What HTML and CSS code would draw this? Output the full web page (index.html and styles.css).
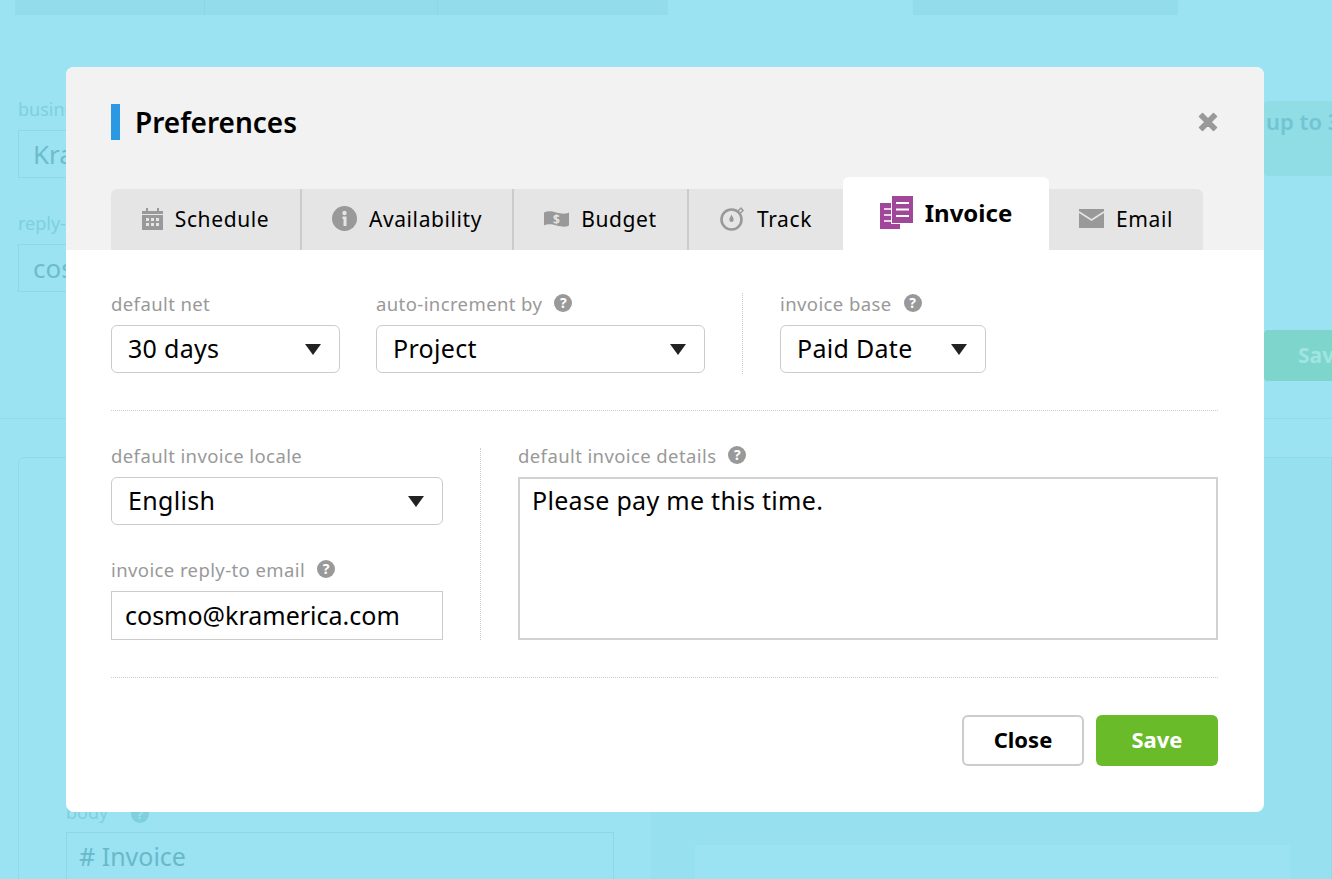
FILE: index.html
```html
<!DOCTYPE html>
<html lang="en">
<head>
  <meta charset="UTF-8" />
  <title>Preferences</title>
  <link rel="stylesheet" href="styles.css">
</head>
<body>
  <!-- page behind the modal -->
  <div class="page">
    <div class="top-strip">
      <div class="strip-cell strip-a"></div>
      <div class="strip-cell strip-b"></div>
      <div class="strip-cell strip-c"></div>
      <div class="strip-cell strip-d"></div>
    </div>
    <div class="page-form">
      <div class="page-left">
        <div class="page-label">business name</div>
        <div class="page-input">Kramerica</div>
        <div class="page-label page-label-2">reply-to email</div>
        <div class="page-input">cosmo@kramerica.com</div>
      </div>
      <div class="page-right">
        <div class="page-banner">up to 3</div>
        <div class="page-save">Save</div>
      </div>
    </div>
    <div class="page-rule"></div>
    <div class="page-panel">
      <div class="page-body">
        <div class="page-label page-body-label">body <span class="page-help">?</span></div>
        <div class="page-input page-body-input"># Invoice</div>
      </div>
      <div class="page-box"></div>
    </div>
  </div>

  <div class="modal">
    <div class="modal-head">
      <div class="title-row">
        <span class="title-bar"></span>
        <h2>Preferences</h2>
        <svg class="close-x" width="22" height="22" viewBox="0 0 22 22"><path d="M2.5 5.500 5.500 2.500 11 8l5.500-5.500 3 3L14 11l5.500 5.500-3 3L11 14l-5.500 5.500-3-3L8 11z" fill="#999" stroke="#999" stroke-width="1.500" stroke-linejoin="round"/></svg>
      </div>
      <div class="tabs">
        <div class="tab tab-schedule">
          <svg width="21" height="22" viewBox="0 0 21 22"><path d="M0 3h4V0h2v3h9V0h2v3h4v19H0z" fill="#999"/><path d="M0 6.500h21" stroke="#e5e5e5" stroke-width="1"/><path d="M4 10h3v3H4zM9 10h3v3H9zM14 10h3v3h-3zM4 15h3v3H4zM9 15h3v3H9zM14 15h3v3h-3z" fill="#e5e5e5"/></svg>
          Schedule
        </div>
        <div class="tab tab-avail">
          <svg width="25" height="25" viewBox="0 0 25 25"><circle cx="12.500" cy="12.500" r="12.500" fill="#999"/><circle cx="12.500" cy="7" r="2.200" fill="#e5e5e5"/><path d="M10.500 10.500h4V20h-3v-7h-1z" fill="#e5e5e5"/></svg>
          Availability
        </div>
        <div class="tab tab-budget">
          <svg width="25" height="18" viewBox="0 0 25 18"><path d="M0 2.500c4-2 8-1 12.500 0s8 2 12.500 0v13c-4 2-8 1-12.500 0s-8-2-12.500 0z" fill="#999"/><text x="12.500" y="13.500" class="money">$</text></svg>
          Budget
        </div>
        <div class="tab tab-track">
          <svg width="25" height="25" viewBox="0 0 25 25"><circle cx="11.500" cy="13.500" r="10" fill="none" stroke="#999" stroke-width="2.600"/><path d="M11.500 8.500c1.200 2.500 2.200 3.800 2.200 5.300a2.200 2.200 0 0 1-4.400 0c0-1.500 1-2.800 2.200-5.300z" fill="#999"/><path d="M18 5l3-3 2 2.500-2.500 2.500" fill="none" stroke="#999" stroke-width="1.500"/></svg>
          Track
        </div>
        <div class="tab tab-active">
          <svg width="33" height="33" viewBox="0 0 33 33"><path d="M0 7h20v26H0z" fill="#a0479a"/><path d="M4 13h7M4 19h7M4 25h7" stroke="#fff" stroke-width="1.600"/><path d="M11 -1h23v29H11z" fill="#fff"/><path d="M12 0h21v27H12z" fill="#a0479a"/><path d="M16 7h13M16 13.500h13M16 20h13" stroke="#fff" stroke-width="1.800"/></svg>
          Invoice
        </div>
        <div class="tab tab-email">
          <svg width="25" height="19" viewBox="0 0 25 19"><path d="M0 0h25v19H0z" fill="#999"/><path d="M0 3l12.500 8L25 3" fill="none" stroke="#e5e5e5" stroke-width="1.600"/></svg>
          Email
        </div>
      </div>
    </div>

    <div class="modal-body">
      <div class="row-top">
        <div class="field field-net">
          <label>default net</label>
          <div class="select">30 days</div>
        </div>
        <div class="field field-inc">
          <label>auto-increment by <span class="help">?</span></label>
          <div class="select">Project</div>
        </div>
        <div class="field field-base">
          <label>invoice base <span class="help">?</span></label>
          <div class="select">Paid Date</div>
        </div>
      </div>

      <div class="row-mid">
        <div class="col-left">
          <div class="field">
            <label>default invoice locale</label>
            <div class="select">English</div>
          </div>
          <div class="field field-reply">
            <label>invoice reply-to email <span class="help">?</span></label>
            <input type="text" value="cosmo@kramerica.com">
          </div>
        </div>
        <div class="col-divider"></div>
        <div class="col-right">
          <label>default invoice details <span class="help">?</span></label>
          <textarea>Please pay me this time.</textarea>
        </div>
      </div>

      <div class="actions">
        <button class="btn-close">Close</button>
        <button class="btn-save">Save</button>
      </div>
    </div>
  </div>
</body>
</html>
```

FILE: styles.css
```css
* {
  box-sizing: border-box;
}

body {
  margin: 0;
  height: 879px;
  overflow: hidden;
  background-color: #9be3f2;
  font-family: "Noto Sans", "Open Sans", sans-serif;
  color: #000;
  position: relative;
}

/* background page, faded */
.page {
  height: 879px;
  overflow: hidden;
  color: #6cbccd;
}

.top-strip {
  display: flex;
  height: 15px;
}

.strip-cell {
  background-color: #93dcec;
  border-right: 1px solid #8dd6e6;
}

.strip-a {
  width: 190px;
  margin-left: 15px;
}

.strip-b {
  width: 233px;
}

.strip-c {
  width: 230px;
  border-right: 0;
}

.strip-d {
  width: 265px;
  margin-left: 245px;
  border-right: 0;
}

.page-form {
  display: flex;
  justify-content: space-between;
  padding: 82px 0 0 18px;
  height: 403px;
}

.page-left {
  width: 520px;
}

.page-label {
  font-size: 18px;
  line-height: 24px;
  color: #7fcfdf;
  white-space: nowrap;
}

.page-label-2 {
  margin-top: 33px;
}

.page-input {
  margin-top: 9px;
  height: 48px;
  border: 1px solid #8bd8e8;
  padding-left: 14px;
  font-size: 26px;
  line-height: 46px;
  white-space: nowrap;
  overflow: hidden;
}

.page-right {
  width: 68px;
  overflow: hidden;
  padding-top: 4px;
}

.page-banner {
  height: 75px;
  background-color: #90dde6;
  border-radius: 4px 0 0 4px;
  padding-left: 2px;
  font-size: 22px;
  font-weight: 600;
  line-height: 40px;
  white-space: nowrap;
  color: #72c4d4;
}

.page-save {
  margin-top: 154px;
  height: 51px;
  background-color: #7dd5cb;
  border-radius: 4px 0 0 4px;
  padding-left: 34px;
  font-size: 21px;
  font-weight: 700;
  line-height: 50px;
  white-space: nowrap;
  color: #a0e5e2;
}

.page-rule {
  height: 1px;
  background-color: #91dbea;
}

.page-panel {
  display: flex;
  align-items: flex-start;
  margin: 38px 0 0 18px;
  height: 440px;
  border: 1px solid #8fdaea;
  border-radius: 6px 0 0 0;
  padding: 342px 0 0 47px;
  background: linear-gradient(to right, #9be3f2 632px, #97e0ef 632px);
}

.page-body {
  width: 548px;
}

.page-body-input {
  margin-top: 8px;
  padding-left: 12px;
  font-size: 25px;
  line-height: 46px;
  height: 60px;
  color: #68b9ca;
}

.page-help {
  display: inline-block;
  width: 18px;
  height: 18px;
  margin-left: 18px;
  border-radius: 50%;
  background-color: #7fcfdf;
  color: #9be3f2;
  font-size: 13px;
  font-weight: 700;
  line-height: 18px;
  text-align: center;
}

.page-box {
  width: 595px;
  height: 60px;
  margin: 45px 0 0 81px;
  background-color: #9be3f2;
}

/* modal */
.modal {
  position: absolute;
  left: 66px;
  top: 67px;
  width: 1198px;
  height: 745px;
  background-color: #fff;
  border-radius: 8px;
  overflow: hidden;
}

.modal-head {
  height: 183px;
  background-color: #f2f2f2;
  padding: 37px 45px 0;
  display: flex;
  flex-direction: column;
  justify-content: space-between;
}

.title-row {
  display: flex;
  align-items: center;
  height: 36px;
}

.title-bar {
  width: 9px;
  height: 36px;
  background-color: #2a98e3;
}

h2 {
  margin: 0 0 0 15px;
  font-size: 28px;
  font-weight: 600;
  line-height: 36px;
  flex: 1;
}

.tabs {
  display: flex;
  align-items: flex-end;
}

.tab {
  height: 61px;
  padding-bottom: 2px;
  display: flex;
  align-items: center;
  justify-content: center;
  gap: 12px;
  background-color: #e5e5e5;
  border-right: 1px solid #ccc;
  font-size: 21px;
  letter-spacing: 0.6px;
}

.tab-schedule {
  width: 191px;
  border-radius: 6px 0 0 0;
  border-right-width: 2px;
}

.tab-avail {
  width: 212px;
  border-right-width: 2px;
}

.tab-budget {
  width: 175px;
  border-right-width: 2px;
}

.tab-track {
  width: 154px;
  border-right: 0;
}

.tab-active {
  width: 206px;
  height: 73px;
  background-color: #fff;
  border: 0;
  border-radius: 6px 6px 0 0;
  font-size: 24px;
  font-weight: 700;
  letter-spacing: 0;
}

.tab-email {
  width: 154px;
  border: 0;
  border-radius: 0 6px 0 0;
}

.money {
  fill: #e5e5e5;
  font-family: "Noto Sans", sans-serif;
  font-size: 12px;
  font-weight: 700;
  letter-spacing: 0;
  text-anchor: middle;
}

.modal-body {
  padding: 0 46px 0 45px;
}

label {
  display: flex;
  align-items: center;
  gap: 12px;
  height: 22px;
  padding-bottom: 2px;
  font-size: 18.5px;
  letter-spacing: 0.4px;
  color: #999;
  white-space: nowrap;
}

.help {
  width: 18px;
  height: 18px;
  border-radius: 50%;
  background-color: #999;
  color: #fff;
  font-size: 14px;
  font-weight: 700;
  line-height: 18px;
  letter-spacing: 0;
  text-align: center;
}

.select {
  margin-top: 10px;
  height: 48px;
  border: 1px solid #ccc;
  border-radius: 6px;
  padding: 0 18px 2px 16px;
  display: flex;
  align-items: center;
  justify-content: space-between;
  font-size: 25px;
  letter-spacing: 0.3px;
  background-color: #fff;
}

.select::after {
  content: "";
  margin-top: 2px;
  border-left: 8px solid transparent;
  border-right: 8px solid transparent;
  border-top: 11px solid #222;
}

.row-top {
  display: flex;
  padding-top: 43px;
  height: 161px;
  border-bottom: 1px dotted #ccc;
}

.field-net {
  width: 229px;
}

.field-inc {
  width: 329px;
  margin-left: 36px;
}

.field-base {
  width: 243px;
  height: 81px;
  margin-left: 37px;
  padding-left: 37px;
  border-left: 1px dotted #ccc;
}

.field-base .select {
  width: 206px;
}

.row-mid {
  display: flex;
  align-items: flex-start;
  height: 267px;
  padding-top: 34px;
  border-bottom: 1px dotted #ccc;
}

.col-left {
  width: 332px;
}

.col-divider {
  width: 1px;
  height: 192px;
  margin: 3px 37px 0;
  border-left: 1px dotted #ccc;
}

.field-reply {
  margin-top: 34px;
}

input {
  display: block;
  margin-top: 10px;
  width: 100%;
  height: 49px;
  border: 1px solid #ccc;
  border-radius: 0;
  padding: 0 13px 2px;
  font-family: inherit;
  font-size: 25px;
  color: #000;
  outline: none;
}

.col-right {
  flex: 1;
}

textarea {
  display: block;
  margin-top: 10px;
  width: 100%;
  height: 163px;
  border: 2px solid #d2d2d2;
  border-radius: 0;
  padding: 3px 12px;
  font-family: inherit;
  font-size: 25px;
  line-height: 36px;
  letter-spacing: 0.3px;
  color: #000;
  resize: none;
  outline: none;
}

.actions {
  display: flex;
  justify-content: flex-end;
  gap: 12px;
  padding-top: 37px;
}

button {
  width: 122px;
  height: 51px;
  padding: 0 0 3px;
  border-radius: 6px;
  font-family: inherit;
  font-size: 22px;
  font-weight: 700;
  cursor: pointer;
}

.btn-close {
  background-color: #fff;
  border: 2px solid #ccc;
  color: #000;
}

.btn-save {
  background-color: #6abb2a;
  border: 0;
  color: #fff;
}
```
